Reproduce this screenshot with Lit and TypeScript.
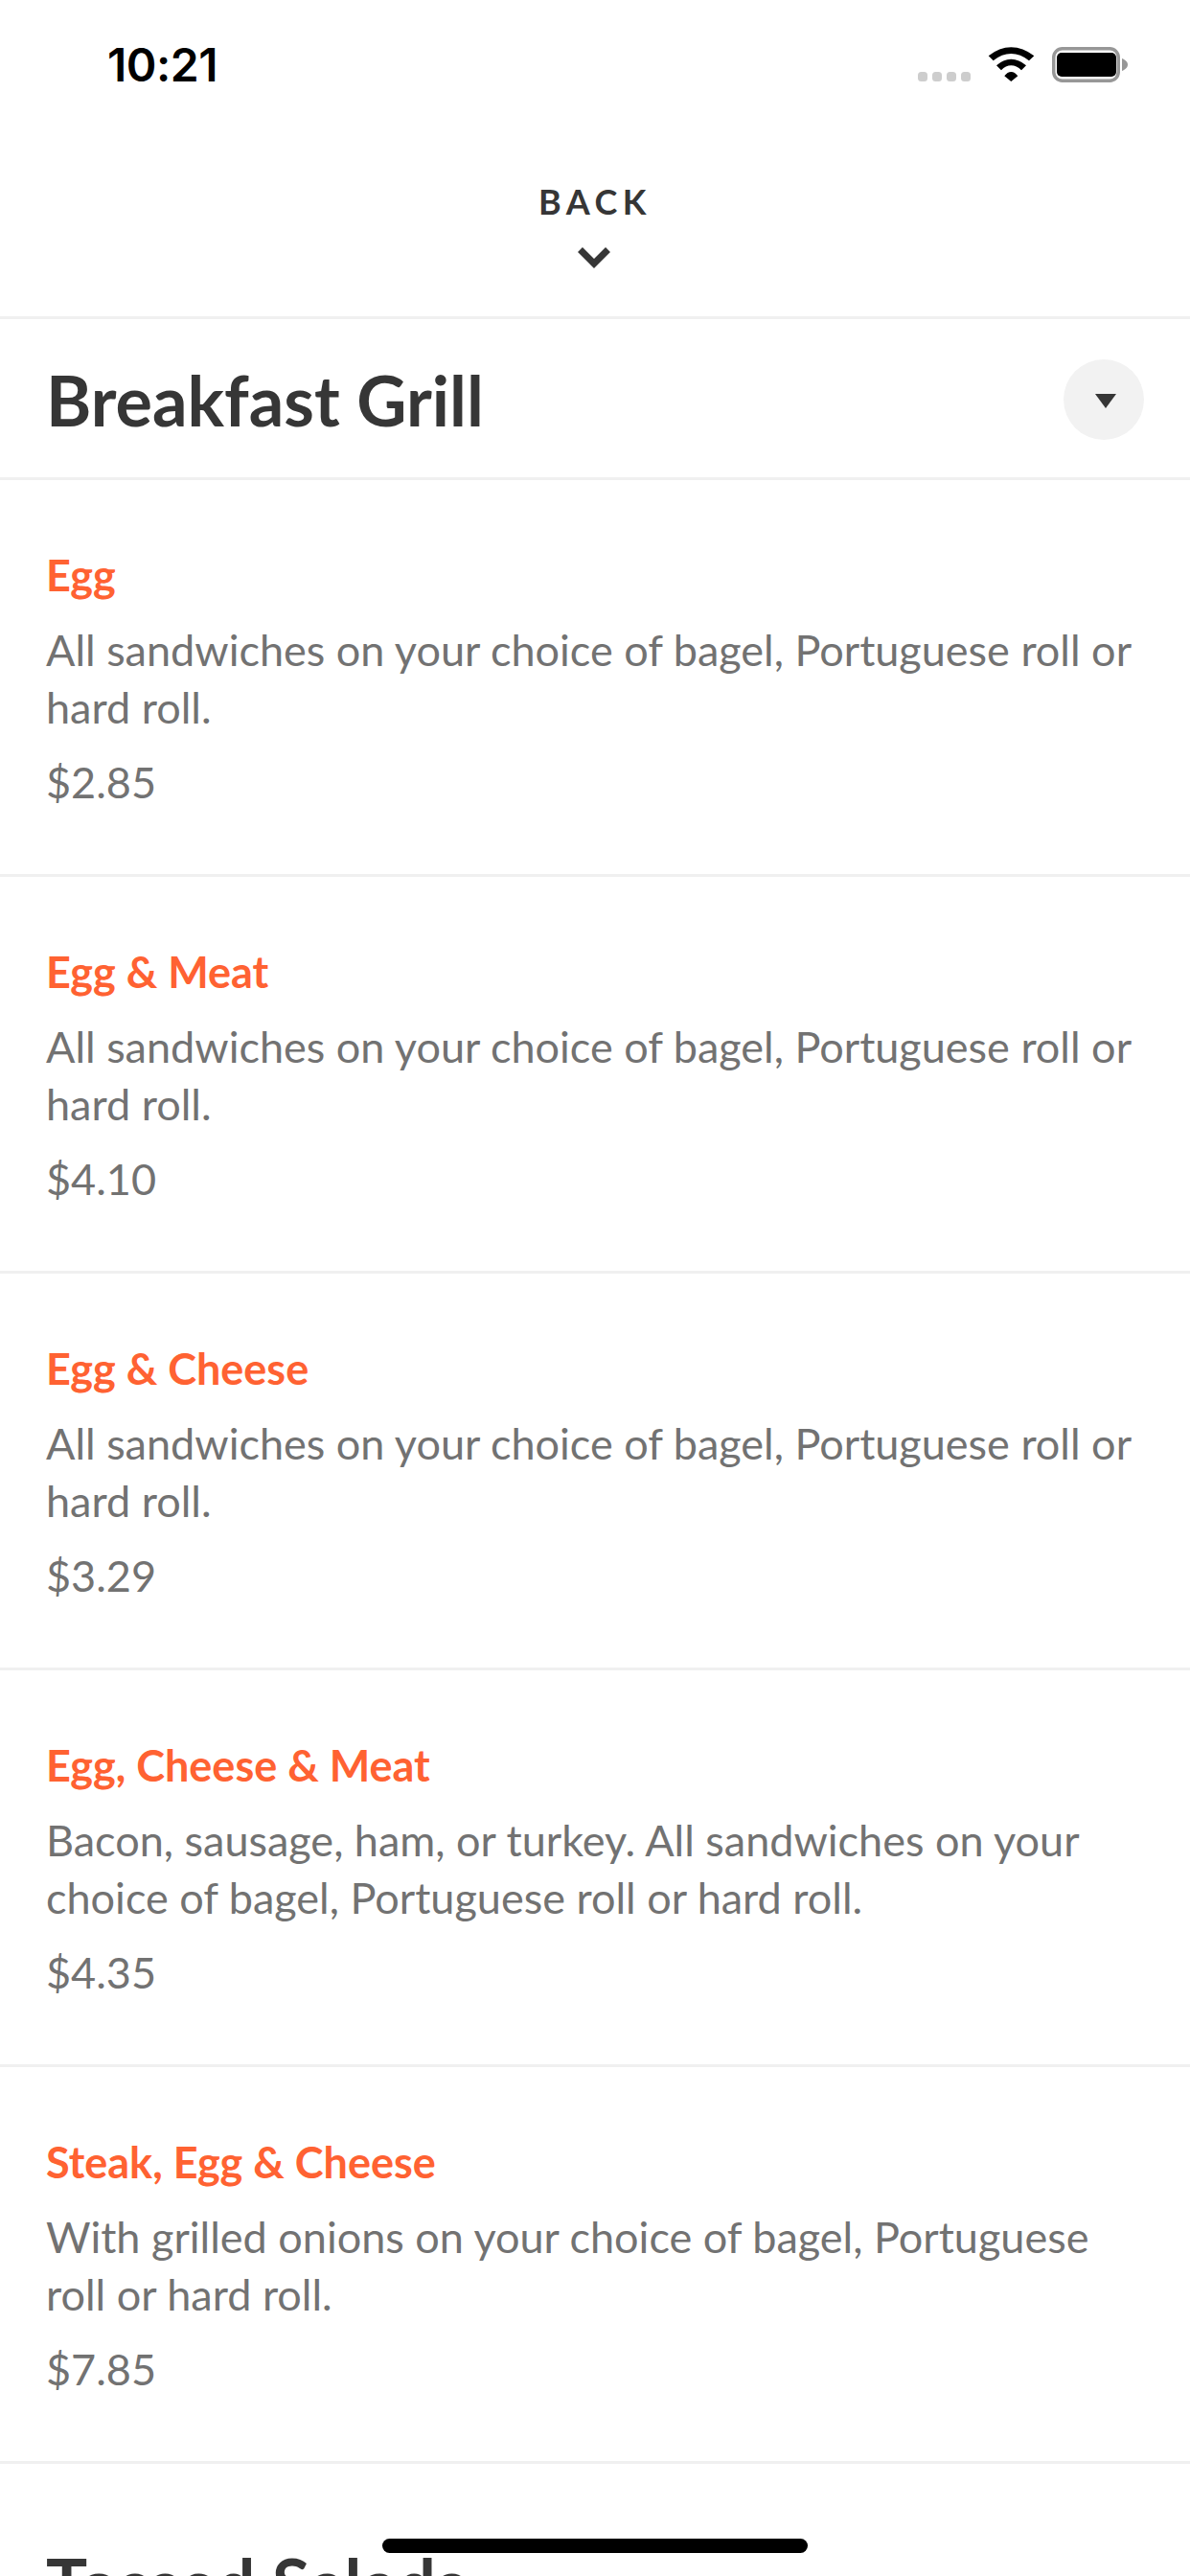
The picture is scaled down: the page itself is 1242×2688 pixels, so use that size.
import { LitElement, html, css, svg } from 'lit';
import { customElement } from 'lit/decorators.js';

const items = [
  { name: 'Egg', desc: 'All sandwiches on your choice of bagel, Portuguese roll or hard roll.', price: '$2.85' },
  { name: 'Egg & Meat', desc: 'All sandwiches on your choice of bagel, Portuguese roll or hard roll.', price: '$4.10' },
  { name: 'Egg & Cheese', desc: 'All sandwiches on your choice of bagel, Portuguese roll or hard roll.', price: '$3.29' },
  { name: 'Egg, Cheese & Meat', desc: 'Bacon, sausage, ham, or turkey. All sandwiches on your choice of bagel, Portuguese roll or hard roll.', price: '$4.35' },
  { name: 'Steak, Egg & Cheese', desc: 'With grilled onions on your choice of bagel, Portuguese roll or hard roll.', price: '$7.85' },
];

@customElement('app-root')
export class AppRoot extends LitElement {
  static styles = css`
    :host {
      display: block;
      position: relative;
      width: 1242px;
      height: 2688px;
      overflow: hidden;
      background: #fff;
      font-family: Lato, 'Open Sans', sans-serif;
    }
    .status {
      height: 135px;
      box-sizing: border-box;
      padding: 46px 65px 0 112px;
      display: flex;
      align-items: flex-start;
      justify-content: space-between;
    }
    .time {
      font-family: Inter, 'Liberation Sans', sans-serif;
      font-size: 48px;
      font-weight: 600;
      line-height: 44px;
      letter-spacing: -0.5px;
      color: #000;
    }
    .status-icons {
      display: block;
      margin-top: 3px;
    }
    .back {
      height: 198px;
      box-sizing: border-box;
      border-bottom: 3px solid #f0f0f0;
      display: flex;
      flex-direction: column;
      align-items: center;
      padding-top: 55px;
    }
    .back-label {
      font-size: 36px;
      font-weight: 700;
      line-height: 40px;
      letter-spacing: 5.5px;
      color: #363636;
    }
    .chevron {
      display: block;
      margin: 27px 0 0 -2px;
    }
    .category {
      height: 168px;
      box-sizing: border-box;
      border-bottom: 3px solid #f0f0f0;
      display: flex;
      align-items: center;
      justify-content: space-between;
      padding: 3px 48px 0;
    }
    .category.next {
      border-bottom: none;
      align-items: flex-start;
      padding-top: 82px;
    }
    h2 {
      margin: 0;
      font-size: 72px;
      font-weight: 700;
      line-height: 84px;
      color: #363636;
    }
    .toggle {
      width: 84px;
      height: 84px;
      border-radius: 50%;
      background: #f2f2f2;
      display: flex;
      align-items: center;
      justify-content: center;
    }
    .toggle svg {
      display: block;
      margin: 3px 0 0 3px;
    }
    .item {
      height: 414px;
      box-sizing: border-box;
      border-bottom: 3px solid #f0f0f0;
      padding: 69px 48px 0;
    }
    .name {
      font-size: 45px;
      font-weight: 700;
      line-height: 60px;
      color: #ff6232;
    }
    .desc {
      margin-top: 18px;
      font-size: 45px;
      line-height: 60px;
      color: #727272;
    }
    .price {
      margin-top: 18px;
      font-size: 45px;
      line-height: 60px;
      color: #727272;
    }
    .home {
      position: absolute;
      left: 399px;
      top: 2649px;
      width: 444px;
      height: 15px;
      border-radius: 8px;
      background: #000;
    }
  `;

  statusIcons() {
    return svg`
      <g fill="#cdcdcd">
        <rect x="0" y="26" width="10" height="10" rx="3.5"/>
        <rect x="15" y="26" width="10" height="10" rx="3.5"/>
        <rect x="30" y="26" width="10" height="10" rx="3.5"/>
        <rect x="45" y="26" width="10" height="10" rx="3.5"/>
      </g>
      <g fill="#000">
        <path d="M73.700 9.300Q85 .3 97.300 .3T121.300 9.300L116 14.300Q107 7 97.300 7T78.700 14.300Z"/>
        <path d="M82 19.300Q89 12.700 97.300 12.700T113 19.300L108 24.300Q103 19.300 97.300 19.300T87 24.300Z"/>
        <path d="M90.300 30.300Q93.500 26 97.300 26T104.300 30.300L97.300 36Z"/>
      </g>
      <rect x="141.750" y="1.750" width="67.500" height="33.500" rx="9" fill="none" stroke="#979797" stroke-width="3.500"/>
      <rect x="145" y="6" width="62" height="25" rx="5" fill="#000"/>
      <path d="M213 12C216.500 13.500 219 15.500 219 18.500C219 21.500 216.500 23.500 213 25Z" fill="#979797"/>
    `;
  }

  render() {
    return html`
      <div class="status">
        <span class="time">10:21</span>
        <svg class="status-icons" width="219" height="37" viewBox="0 0 219 37">${this.statusIcons()}</svg>
      </div>
      <div class="back">
        <span class="back-label">BACK</span>
        <svg class="chevron" width="36" height="24" viewBox="0 0 36 24">
          <path d="M3.500 3.500L18 18L32.500 3.500" fill="none" stroke="#363636" stroke-width="7"/>
        </svg>
      </div>
      <div class="category">
        <h2>Breakfast Grill</h2>
        <div class="toggle">
          <svg width="22" height="16" viewBox="0 0 22 16"><path d="M0 0H22L11 15Z" fill="#363636"/></svg>
        </div>
      </div>
      ${items.map(
        (i) => html`
          <div class="item">
            <div class="name">${i.name}</div>
            <div class="desc">${i.desc}</div>
            <div class="price">${i.price}</div>
          </div>
        `
      )}
      <div class="category next"><h2>Tossed Salads</h2></div>
      <div class="home"></div>
    `;
  }
}
